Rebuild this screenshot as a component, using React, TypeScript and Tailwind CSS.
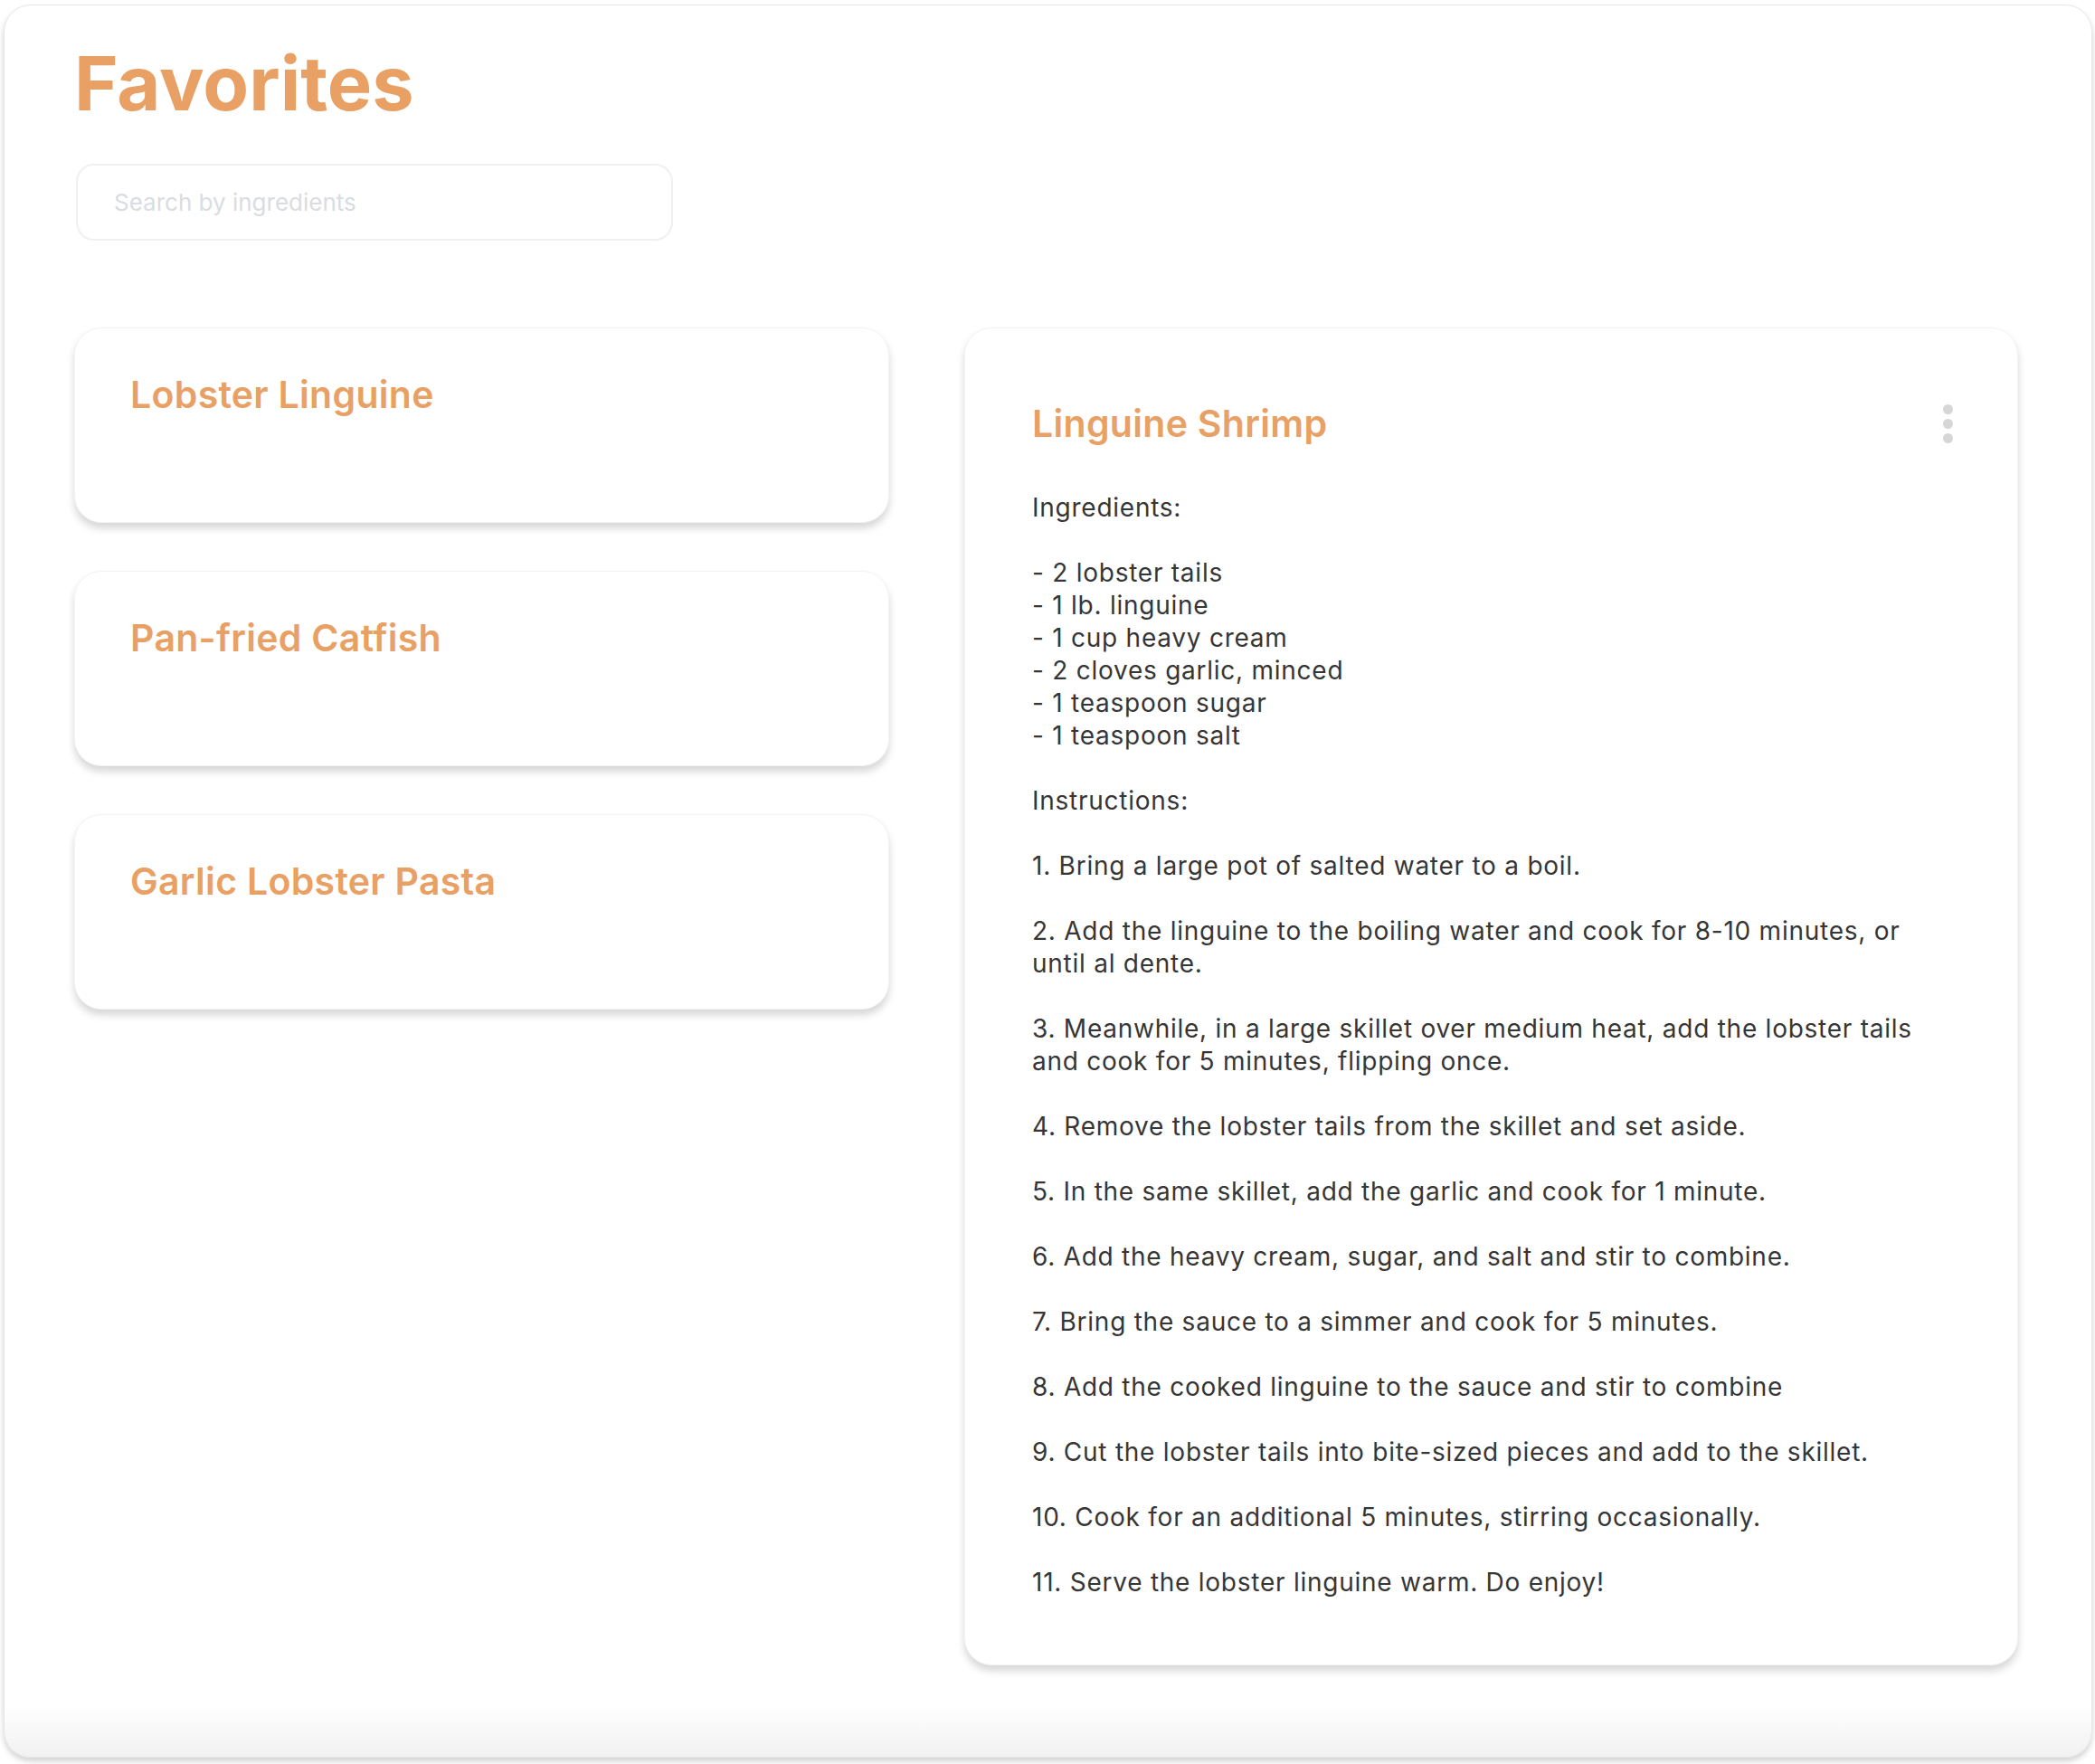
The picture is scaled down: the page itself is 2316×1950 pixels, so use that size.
import { useState } from "react"

type Recipe = {
  title: string
  ingredients: string[]
  steps: string[]
}

const favorites = ["Lobster Linguine", "Pan-fried Catfish", "Garlic Lobster Pasta"]

const selected: Recipe = {
  title: "Linguine Shrimp",
  ingredients: [
    "- 2 lobster tails",
    "- 1 lb. linguine",
    "- 1 cup heavy cream",
    "- 2 cloves garlic, minced",
    "- 1 teaspoon sugar",
    "- 1 teaspoon salt",
  ],
  steps: [
    "1. Bring a large pot of salted water to a boil.",
    "2. Add the linguine to the boiling water and cook for 8-10 minutes, or until al dente.",
    "3. Meanwhile, in a large skillet over medium heat, add the lobster tails and cook for 5 minutes, flipping once.",
    "4. Remove the lobster tails from the skillet and set aside.",
    "5. In the same skillet, add the garlic and cook for 1 minute.",
    "6. Add the heavy cream, sugar, and salt and stir to combine.",
    "7. Bring the sauce to a simmer and cook for 5 minutes.",
    "8. Add the cooked linguine to the sauce and stir to combine",
    "9. Cut the lobster tails into bite-sized pieces and add to the skillet.",
    "10. Cook for an additional 5 minutes, stirring occasionally.",
    "11. Serve the lobster linguine warm. Do enjoy!",
  ],
}

export default function App() {
  const [query, setQuery] = useState("")

  return (
    <div className="min-h-screen bg-white pl-[4px] pr-[3px] pt-[5px] font-['Inter',sans-serif]">
      <div className="rounded-[30px] border border-[#e6e6e6] bg-gradient-to-b from-white from-[97%] to-[#f1f1f1] pl-[77px] pr-[81px] pb-[101px] pt-[45px] shadow-[0_4px_6px_rgba(0,0,0,0.18)]">
        <h1 className="text-[83px] font-bold leading-none text-[#e9a064]">Favorites</h1>

        <input
          value={query}
          onChange={(e) => setQuery(e.target.value)}
          placeholder="Search by ingredients"
          className="ml-[2px] mt-[47px] block h-[85px] w-[660px] rounded-[20px] border-2 border-[#eef0f2] bg-white px-[40px] text-[26px] text-[#374151] outline-none placeholder:text-[#d9dce1]"
        />

        <div className="mt-[96px] flex items-start gap-[83px]">
          <div className="flex w-[901px] flex-col gap-[53px]">
            {favorites.map((name) => (
              <div
                key={name}
                className="h-[216px] rounded-[30px] border border-[#f3f3f3] bg-white px-[61px] pt-[49px] shadow-[0_6px_8px_rgba(0,0,0,0.16)]"
              >
                <h2 className="text-[41px] font-semibold leading-[48px] tracking-[0.3px] text-[#e9a064]">{name}</h2>
              </div>
            ))}
          </div>

          <div className="w-[1165px] rounded-[30px] border border-[#f3f3f3] bg-white pb-[73px] pl-[74px] pr-[67px] pt-[81px] shadow-[0_6px_8px_rgba(0,0,0,0.16)]">
            <div className="flex items-center justify-between">
              <h2 className="text-[41px] font-semibold leading-[48px] tracking-[0.3px] text-[#e9a064]">{selected.title}</h2>
              <button className="flex flex-col items-center gap-[5px] px-1" aria-label="More options">
                <span className="h-[11px] w-[11px] rounded-full bg-[#d6d6d6]" />
                <span className="h-[11px] w-[11px] rounded-full bg-[#d6d6d6]" />
                <span className="h-[11px] w-[11px] rounded-full bg-[#d6d6d6]" />
              </button>
            </div>

            <div className="mt-[51px] flex flex-col gap-9 text-[28px] leading-[36px] tracking-[0.75px] text-[#363636]">
              <p>Ingredients:</p>
              <div>
                {selected.ingredients.map((line) => (
                  <p key={line}>{line}</p>
                ))}
              </div>
              <p>Instructions:</p>
              {selected.steps.map((step) => (
                <p key={step}>{step}</p>
              ))}
            </div>
          </div>
        </div>
      </div>
    </div>
  )
}
